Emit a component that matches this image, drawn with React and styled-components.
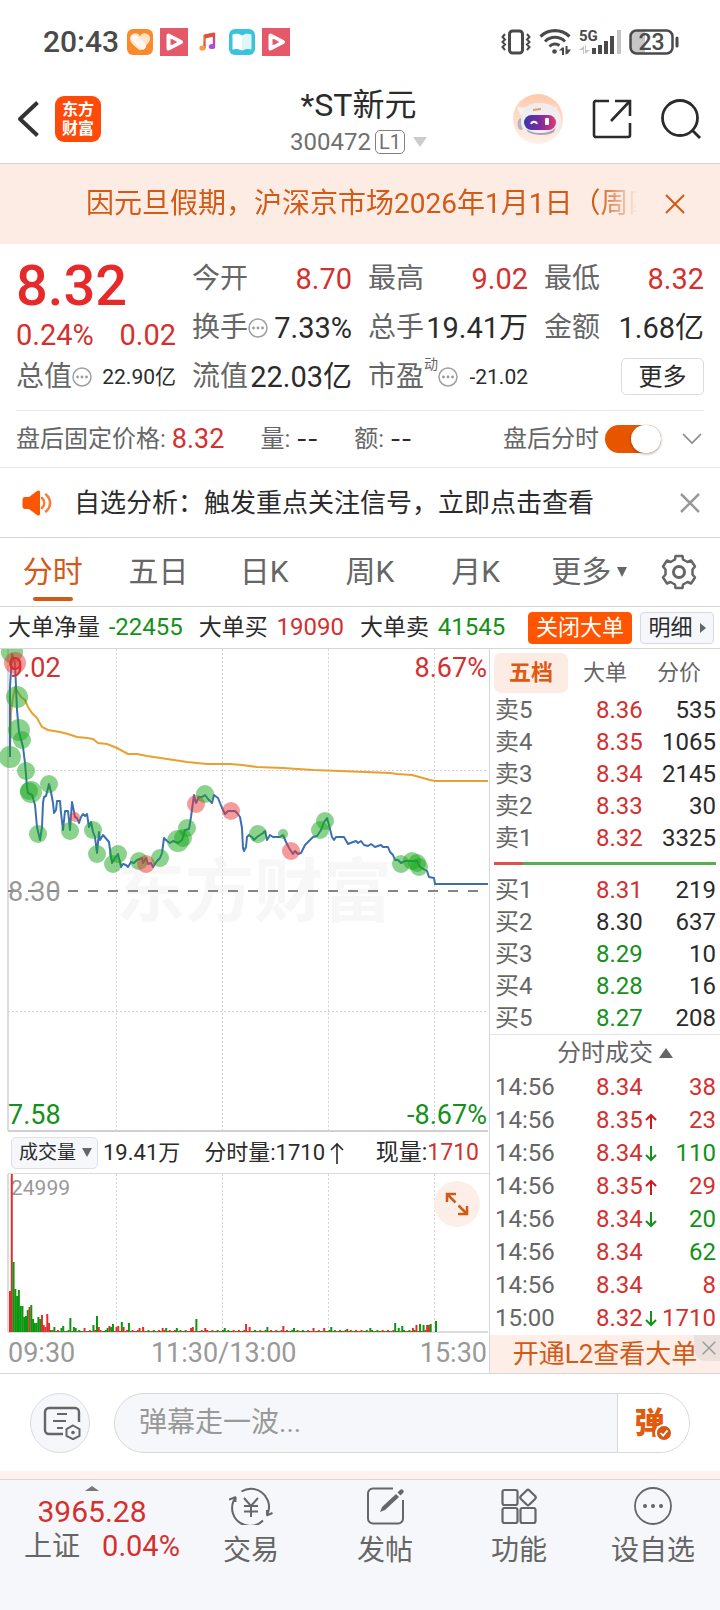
import React from "react";
import styled, { createGlobalStyle } from "styled-components";

const RED = "#d3312f";
const GREEN = "#14911a";
const ORANGE = "#d25a16";

const GlobalStyle = createGlobalStyle`
  * {
    box-sizing: border-box;
  }
  body {
    margin: 0;
    background: #fff;
    color: #2b2b2b;
    font-family: Roboto, "Noto Sans CJK SC", sans-serif;
  }
  button,
  input,
  select {
    font-family: inherit;
    color: inherit;
    margin: 0;
    padding: 0;
    border: none;
    background: none;
  }
  svg {
    display: block;
    flex-shrink: 0;
  }
`;

/* ---------- data ---------- */

const sells = [
  ["卖5", "8.36", "535"],
  ["卖4", "8.35", "1065"],
  ["卖3", "8.34", "2145"],
  ["卖2", "8.33", "30"],
  ["卖1", "8.32", "3325"],
];

const buys = [
  ["买1", "8.31", "219"],
  ["买2", "8.30", "637"],
  ["买3", "8.29", "10"],
  ["买4", "8.28", "16"],
  ["买5", "8.27", "208"],
];

const trades = [
  { time: "14:56", price: "8.34", volume: "38", tone: "up" },
  { time: "14:56", price: "8.35", arrow: "up", volume: "23", tone: "up" },
  { time: "14:56", price: "8.34", arrow: "down", volume: "110", tone: "down" },
  { time: "14:56", price: "8.35", arrow: "up", volume: "29", tone: "up" },
  { time: "14:56", price: "8.34", arrow: "down", volume: "20", tone: "down" },
  { time: "14:56", price: "8.34", volume: "62", tone: "down" },
  { time: "14:56", price: "8.34", volume: "8", tone: "up" },
  { time: "15:00", price: "8.32", arrow: "down", volume: "1710", tone: "up" },
];

const priceLine =
  "10,108 10,38 12,5 15,14 16,38 17,61 19,83 23,98 25,114 27,138 28,144 32,146 35,156 37,178 40,191 42,178 43,154 44,148 46,147 49,135 51,143 53,154 54,164 56,161 57,152 60,152 61,164 63,181 65,162 68,162 69,171 70,181 72,153 73,158 75,168 77,169 79,174 81,168 83,165 85,167 87,165 89,178 91,173 93,183 95,188 97,204 99,183 100,191 103,186 109,193 111,208 112,214 115,209 118,205 121,218 123,215 126,216 128,218 131,213 134,214 137,211 142,209 143,214 146,209 148,215 151,214 153,218 157,212 160,209 162,204 164,189 167,192 170,194 173,192 178,194 182,191 185,181 189,180 191,168 194,146 196,154 199,148 202,148 205,146 208,150 212,154 214,146 218,149 222,159 225,165 228,162 235,162 237,164 240,168 242,179 243,199 244,202 246,198 247,188 249,186 252,188 254,191 257,188 260,186 263,184 265,182 267,191 270,186 273,188 280,188 283,186 286,193 289,199 293,205 295,202 298,205 301,204 305,196 310,191 313,188 317,187 321,181 324,173 327,169 329,176 332,188 334,191 336,188 344,188 348,195 353,193 356,192 358,194 361,192 364,196 368,197 371,195 375,198 381,196 383,198 388,198 390,203 393,206 395,211 398,211 401,214 405,212 417,212 420,218 427,222 429,228 434,229 435,235 488,235";

const averageLine =
  "10,108 11,64 13,48 15,39 18,43 21,48 25,51 28,58 32,64 37,69 42,78 48,81 60,83 68,85 77,88 87,89 93,90 98,94 107,95 117,99 128,105 137,105 147,107 167,110 187,113 207,115 230,115 242,116 257,118 283,119 313,121 340,122 390,124 397,125 412,126 423,129 430,131 435,132 488,132";

// x, y, radius, and whether the big order was a buy
const markers = [
  [12, 3, 11], [15, 14, 11, true], [15, 14, 6, true], [17, 48, 11], [19, 81, 11],
  [22, 91, 9], [10, 108, 11], [26, 122, 9], [31, 143, 11], [29, 142, 9],
  [49, 135, 9], [38, 185, 9], [70, 182, 9], [75, 168, 5, true], [93, 181, 9],
  [97, 205, 9], [113, 215, 9], [118, 205, 9], [139, 212, 9], [146, 215, 9, true],
  [160, 209, 9], [178, 192, 11], [183, 189, 9], [187, 179, 9], [196, 155, 9, true],
  [205, 145, 9], [231, 162, 9, true], [258, 185, 9], [283, 185, 5],
  [291, 202, 9, true], [320, 181, 9], [325, 172, 9], [401, 215, 9], [412, 212, 9],
  [417, 214, 9], [419, 218, 9],
];

const opening = [
  [41, true], [158, true], [70], [43], [36], [42], [26], [26], [15], [16], [22],
  [25, true], [27], [13], [9], [9], [15], [13], [17, true], [7, true], [5, true],
  [18, true], [9, true], [2],
];

const spikes = {
  25: [5], 29: [4], 30: [6], 34: [14], 36: [5], 37: [4], 42: [4, true], 47: [7],
  49: [16], 50: [5, true], 55: [4], 56: [6, true], 57: [5], 58: [8], 60: [5, true],
  61: [6, true], 63: [10], 64: [5, true], 67: [9], 73: [4, true], 75: [5, true],
  86: [4, true], 88: [4], 94: [4], 102: [4, true], 103: [5, true], 105: [13],
  110: [4, true], 121: [4], 133: [8, true], 135: [5, true], 145: [5],
  154: [6, true], 160: [4], 171: [4, true], 177: [4, true], 181: [5], 190: [3],
  203: [4], 217: [9], 219: [4], 221: [6], 227: [4, true], 229: [7, true],
  231: [8], 233: [7], 235: [7, true], 236: [7, true], 237: [8], 240: [11],
};

const bars = Array.from({ length: 241 }, (_, i) => {
  const [height, up] =
    opening[i] || spikes[i] || (i > 237 ? [0] : [1 + ((i * 7) % 3 === 0 ? 1 : 0), (i * 5) % 7 < 4]);
  return { x: 9 + (i * 426) / 240, height, up };
});

const gridX = [116, 222, 328, 434];

/* ---------- icons ---------- */

const HeartApp = () => (
  <svg width="28" height="28" viewBox="0 0 28 28">
    <rect x="1" y="1" width="26" height="26" rx="6" fill="#fa8a2c" />
    <path d="M14 22.500C8 18 4 14.500 4 10.500A5.200 5.200 0 0 1 14 8.500a5.200 5.200 0 0 1 10 2C24 14.500 20 18 14 22.500z" fill="#ffe3c6" />
    <path d="M8.500 10l8 8" stroke="#fff8f0" strokeWidth="7" strokeLinecap="round" />
  </svg>
);

const PlayApp = () => (
  <svg width="28" height="28" viewBox="0 0 28 28">
    <rect width="28" height="28" fill="#e4586a" />
    <path d="M8.500 7.500L21 14 8.500 20.500z" fill="#e4586a" stroke="#fff" strokeWidth="4" strokeLinejoin="round" />
    <path d="M12 11l5 3-5 3z" fill="#e4586a" />
  </svg>
);

const MusicApp = () => (
  <svg width="28" height="28" viewBox="0 0 28 28">
    <defs>
      <linearGradient id="note" x1="0" y1="0" x2="1" y2="1">
        <stop offset="0" stopColor="#f0903a" />
        <stop offset=".45" stopColor="#e0483c" />
        <stop offset="1" stopColor="#a44be0" />
      </linearGradient>
    </defs>
    <path d="M10.500 20V8l9.500-2v12" fill="none" stroke="url(#note)" strokeWidth="2.400" />
    <path d="M10.500 8.500l9.500-2" stroke="#e0503c" strokeWidth="4" />
    <ellipse cx="8.500" cy="20" rx="3.200" ry="2.600" fill="#f0a040" />
    <ellipse cx="18" cy="18.500" rx="3.200" ry="2.600" fill="#b04be0" />
  </svg>
);

const BookApp = () => (
  <svg width="28" height="28" viewBox="0 0 28 28">
    <rect x="1" y="1" width="26" height="26" rx="6" fill="#38c5dc" />
    <path d="M4.500 6.500c3.500-1.500 6.500-1 9.500 1v15c-3-1.500-6-2-9.500-1z" fill="#fff" />
    <path d="M23.500 6.500c-3.500-1.500-6.500-1-9.500 1v15c3-1.500 6-2 9.500-1z" fill="#dff6fb" />
  </svg>
);

const Vibrate = () => (
  <svg width="30" height="28" viewBox="0 0 30 28" fill="none" stroke="#4a4a4a">
    <rect x="8.500" y="3" width="13" height="22" rx="3" strokeWidth="3" />
    <path d="M4 6l-2.500 3L4 11.500 1.500 14 4 16.500 1.500 19 4 22M26 6l2.500 3-2.500 2.500 2.500 2.500-2.500 2.500 2.500 2.500-2.500 3" strokeWidth="2" />
  </svg>
);

const Wifi = () => (
  <svg width="32" height="28" viewBox="0 0 32 28" fill="none" stroke="#4a4a4a">
    <path d="M1.500 8.500a21 21 0 0 1 29 0" strokeWidth="3.200" />
    <path d="M6 13.500a14 14 0 0 1 20 0" strokeWidth="3" />
    <path d="M10.500 18.500a7.500 7.500 0 0 1 10-1" strokeWidth="3" />
    <circle cx="15.500" cy="23.500" r="2.300" fill="#4a4a4a" stroke="none" />
    <path d="M20 22.500l3-3h2V27h-2v-4.500zM32 21.500l-3 4-2.500 1V18h2v3.500z" fill="#4a4a4a" stroke="none" />
  </svg>
);

const Signal = () => (
  <svg width="42" height="28" viewBox="0 0 42 28" fill="#4a4a4a">
    <text x="0" y="13" fontSize="15" fontWeight="700">5G</text>
    <path d="M0 22l5-4v8H4v-4zM11 22l-5 4v-9h1v5z" fill="#c4c4c4" />
    <path d="M13 20h4v6h-4zM19 17h4v9h-4zM25 13h4v13h-4zM31 8h4v18h-4z" />
    <path d="M38 2h4v24h-4z" fill="#c4c4c4" />
  </svg>
);

const Battery = () => (
  <svg width="50" height="28" viewBox="0 0 50 28">
    <path d="M6 3h10v22H6a4 4 0 0 1-4-4V7a4 4 0 0 1 4-4z" fill="#c6c6c6" />
    <rect x="1.500" y="2.500" width="42" height="23" rx="6" fill="none" stroke="#4a4a4a" strokeWidth="2.500" />
    <path d="M48 10v8" stroke="#4a4a4a" strokeWidth="3" strokeLinecap="round" />
    <text x="22.500" y="22" fontSize="23" fontWeight="500" fill="#4a4a4a" textAnchor="middle">23</text>
  </svg>
);

const Back = () => (
  <svg width="24" height="40" viewBox="0 0 24 40" fill="none" stroke="#333" strokeWidth="4">
    <path d="M21.500 3.500L4 20l17.500 16.500" strokeLinejoin="round" />
  </svg>
);

const Robot = () => (
  <svg width="50" height="50" viewBox="0 0 50 50">
    <defs>
      <linearGradient id="halo" x1="0" y1="0" x2="0" y2="1">
        <stop offset="0" stopColor="#ffc9ab" />
        <stop offset="1" stopColor="#fff1ea" />
      </linearGradient>
      <linearGradient id="visor">
        <stop offset="0" stopColor="#3d35a8" />
        <stop offset=".5" stopColor="#7a2aa0" />
        <stop offset="1" stopColor="#e03a70" />
      </linearGradient>
    </defs>
    <circle cx="25" cy="25" r="25" fill="url(#halo)" />
    <path d="M5 12c2 2 5 2 8 1h24c3 1 5 1 6-1 2 4 0 8-3 9H9c-3-1-5-5-4-9z" fill="#f6f2f2" />
    <ellipse cx="8" cy="30" rx="3.500" ry="6" fill="#b9b3bd" />
    <path d="M8 28c0-12 6-19 18-19s22 6 22 18c0 10-8 14-20 14S8 38 8 28z" fill="#f0edf0" />
    <path d="M12 33c4 8 26 8 31 0l-2 5c-5 4-20 4-26 0z" fill="#aaa3b5" />
    <path d="M20 15l8-1v2l-8 1z" fill="#e79a5c" />
    <rect x="11" y="21" width="32" height="15" rx="7.500" fill="url(#visor)" />
    <path d="M18 30c1-3 5-3 6 0" fill="none" stroke="#fff" strokeWidth="2" />
    <rect x="32" y="24" width="4" height="7" rx="1" fill="#fff" />
  </svg>
);

const Share = () => (
  <svg width="40" height="40" viewBox="0 0 40 40" fill="none" stroke="#2b2b2b" strokeWidth="2.600">
    <path d="M17 2H4.500A2 2 0 0 0 2 4v32a2 2 0 0 0 2.500 2H36a2 2 0 0 0 2-2V24" />
    <path d="M23 2h15v15M37 3L19 22" />
  </svg>
);

const Search = () => (
  <svg width="40" height="40" viewBox="0 0 40 40" fill="none" stroke="#2b2b2b" strokeWidth="2.800">
    <circle cx="19" cy="19" r="17.500" />
    <path d="M31 31l8 8" />
  </svg>
);

const Cross = ({ size = 20, color = "#999", weight = 2.5 }) => (
  <svg width={size} height={size} viewBox="0 0 20 20" stroke={color} strokeWidth={weight}>
    <path d="M1 1l18 18M19 1L1 19" />
  </svg>
);

const Info = () => (
  <svg width="20" height="20" viewBox="0 0 20 20" fill="#999">
    <circle cx="10" cy="10" r="9" fill="none" stroke="#a0a0a0" strokeWidth="1.500" />
    <circle cx="5.500" cy="10" r="1.400" />
    <circle cx="10" cy="10" r="1.400" />
    <circle cx="14.500" cy="10" r="1.400" />
  </svg>
);

const Triangle = ({ width = 14, height = 10, color = "#666", up }) => (
  <svg width={width} height={height} viewBox="0 0 14 10" preserveAspectRatio="none" fill={color}>
    <path d={up ? "M7 0l7 10H0z" : "M0 0h14L7 10z"} />
  </svg>
);

const Chevron = () => (
  <svg width="20" height="12" viewBox="0 0 20 12" fill="none" stroke="#888" strokeWidth="1.600">
    <path d="M1 1l9 9 9-9" />
  </svg>
);

const Speaker = () => (
  <svg width="30" height="26" viewBox="0 0 30 26">
    <path d="M3 7h4l8-6c1.500-1 3-.5 3 1v22c0 1.500-1.500 2-3 1l-8-6H3c-1.500 0-2.500-1-2.500-3V10C.5 8 1.500 7 3 7z" fill="#ff5500" />
    <path d="M20 8c3 3 3 7 0 10M24 4.500c5.500 5 5.500 12 0 17" fill="none" stroke="#ff7a33" strokeWidth="2.500" strokeLinecap="round" />
  </svg>
);

const Gear = () => (
  <svg width="36" height="36" viewBox="0 0 36 36" fill="none" stroke="#666" strokeWidth="2.500" strokeLinejoin="round">
    <path d="M14.500 2h7l.5 3.500 4.500 2.500 3.500-1.500 4 6-2.500 3v5l2.500 3-4 6-3.500-1.500-4.500 2.500-.5 3.500h-7l-.5-3.500L9.500 28 6 29.500l-4-6 2.500-3v-5l-2.500-3 4-6L9.500 8 14 5.500z" />
    <circle cx="18" cy="18" r="5.500" strokeWidth="3" />
  </svg>
);

const Tick = ({ down }) => (
  <svg width="12" height="16" viewBox="0 0 12 16" fill="none" stroke={down ? GREEN : "#d01818"} strokeWidth="2">
    <path d={down ? "M6 0v14M1 9l5 5 5-5" : "M6 16V2M1 7l5-5 5 5"} />
  </svg>
);

const Expand = () => (
  <svg width="24" height="24" viewBox="0 0 24 24" fill="none" stroke={ORANGE} strokeWidth="2.500">
    <path d="M2 10V2h9M2.500 2.500l8 8M22 14v8h-9M21.500 21.500l-8-8" />
  </svg>
);

const CommentSettings = () => (
  <svg width="38" height="34" viewBox="0 0 38 34" fill="none" stroke="#666" strokeWidth="2.400">
    <path d="M20 28H6a4 4 0 0 1-4-4V6a4 4 0 0 1 4-4h26a4 4 0 0 1 4 4v10" />
    <path d="M14 8h10M10 15h13M14 22h6" strokeWidth="2" />
    <path d="M30 19.500l6.500 3.700v6.600L30 33.200l-6.500-3.400v-6.600z" strokeWidth="2" />
    <circle cx="30" cy="26.500" r="1.800" fill="#666" stroke="none" />
  </svg>
);

const Checked = () => (
  <svg width="14" height="14" viewBox="0 0 16 16">
    <circle cx="8" cy="8" r="8" fill={ORANGE} />
    <path d="M4 8l3 3 5-6" fill="none" stroke="#fff" strokeWidth="2" />
  </svg>
);

const TradeIcon = () => (
  <svg width="44" height="38" viewBox="0 0 44 38" fill="none" stroke="#666" strokeWidth="2">
    <path d="M12.500 4.500A18 18 0 0 1 39.500 24L38 27.500M37.500 28.500l6-2.500M38 28.500V23" />
    <path d="M34 33.500A18 18 0 0 1 4.500 14L7 10M0 12.500l7-2.500M6.500 10v5" />
    <path d="M15 11l7 8 7-8M15 19h14M15 24.500h14M22 19v11" />
  </svg>
);

const PostIcon = () => (
  <svg width="38" height="38" viewBox="0 0 38 38" fill="none" stroke="#666" strokeWidth="2">
    <path d="M27 1.500H7A5 5 0 0 0 2 7v24a5 5 0 0 0 5 5.500h25a5 5 0 0 0 5-5.500V13" />
    <path d="M14 25l2-5L30 7l3 3L19 23z" fill="#666" stroke="none" />
    <path d="M31.500 5.500l2.500-2.500a2 2 0 0 1 3 3L34.500 8.500z" fill="#666" stroke="none" />
  </svg>
);

const FeaturesIcon = () => (
  <svg width="38" height="38" viewBox="0 0 38 38" fill="none" stroke="#666" strokeWidth="2.200">
    <rect x="2.500" y="3" width="15" height="15" rx="2" />
    <rect x="2.500" y="21" width="15" height="15" rx="2" />
    <rect x="20.500" y="21" width="15" height="15" rx="2" />
    <rect x="22" y="4.500" width="12" height="12" rx="2" transform="rotate(45 28 10.500)" />
  </svg>
);

const WatchIcon = () => (
  <svg width="38" height="38" viewBox="0 0 38 38" fill="#666">
    <circle cx="19" cy="19" r="18" fill="none" stroke="#666" strokeWidth="1.800" />
    <circle cx="11" cy="19" r="2" />
    <circle cx="19" cy="19" r="2" />
    <circle cx="27" cy="19" r="2" />
  </svg>
);

/* ---------- sections ---------- */

const PriceChart = () => (
  <svg width="100%" viewBox="0 0 489 483" role="img" aria-label="分时走势">
    <text x="116" y="267" fontSize="69" fontWeight="700" fill="#f7f7f7">东方财富</text>
    <g stroke="#d4d4d4" strokeDasharray="2 2">
      {gridX.map((x) => (
        <path key={x} d={`M${x}.500 0V481`} />
      ))}
      <path d="M8 121.500H488M8 362.500H488" />
    </g>
    <path d="M8 0v482" stroke="#dcdcdc" strokeWidth="2" />
    <path d="M8 482h480" stroke="#d0d0d0" strokeWidth="2" />
    <path d="M8 242h472" stroke="#858585" strokeWidth="2" strokeDasharray="10 10" />
    <polyline points={averageLine} fill="none" stroke="#e9a030" strokeWidth="2" />
    <polyline points={priceLine} fill="none" stroke="#3a70b2" strokeWidth="2" strokeLinejoin="round" />
    {markers.map(([x, y, r, buy], i) => (
      <circle key={i} cx={x} cy={y} r={r} fill={buy ? "#ec3838" : "#18a81c"} opacity=".5" />
    ))}
    <g fontSize="27">
      <text x="8" y="28" fill={RED}>9.02</text>
      <text x="487" y="28" fill={RED} textAnchor="end">8.67%</text>
      <text x="8" y="252" fill="#999">8.30</text>
      <text x="8" y="475" fill={GREEN}>7.58</text>
      <text x="487" y="475" fill={GREEN} textAnchor="end">-8.67%</text>
    </g>
  </svg>
);

const VolumeChart = () => (
  <svg width="100%" viewBox="0 0 489 159" role="img" aria-label="成交量">
    <g stroke="#d4d4d4" strokeDasharray="2 2">
      {gridX.map((x) => (
        <path key={x} d={`M${x}.500 0V158`} />
      ))}
    </g>
    <path d="M8 0v158" stroke="#dcdcdc" strokeWidth="2" />
    <path d="M8 158h480" stroke="#dcdcdc" strokeWidth="2" />
    <text x="11" y="21" fontSize="21" fill="#999">24999</text>
    {bars.map(({ x, height, up }, i) => (
      <rect key={i} x={x} y={158 - height} width="2" height={height} fill={up ? "#df2f2f" : "#0a970e"} />
    ))}
  </svg>
);

const OrderTable = ({ rows, label }) => (
  <Table aria-label={label}>
    <tbody>
      {rows.map(([name, price, amount]) => (
        <Row key={name} $height={32}>
          <RowName scope="row">{name}</RowName>
          <PriceCell $color={price > "8.30" ? RED : price < "8.30" ? GREEN : "#2b2b2b"}>
            {price}
          </PriceCell>
          <AmountCell>{amount}</AmountCell>
        </Row>
      ))}
    </tbody>
  </Table>
);

const App = () => {
  return (
    <Page>
      <GlobalStyle />
      <StatusBar>
        <Clock>20:43</Clock>
        <AppIcons>
          <HeartApp />
          <PlayApp />
          <MusicApp />
          <BookApp />
          <PlayApp />
        </AppIcons>
        <SystemIcons>
          <Vibrate />
          <Wifi />
          <Signal />
          <Battery />
        </SystemIcons>
      </StatusBar>

      <Header>
        <HeaderSide>
          <IconButton aria-label="返回">
            <Back />
          </IconButton>
          <Logo>
            <span>东方</span>
            <span>财富</span>
          </Logo>
        </HeaderSide>
        <Stock>
          <h1>*ST新元</h1>
          <p>
            300472 <Level>L1</Level>
            <Triangle width={14} height={10} color="#ccc" />
          </p>
        </Stock>
        <HeaderSide $end>
          <IconButton aria-label="智能助手">
            <Robot />
          </IconButton>
          <IconButton aria-label="分享">
            <Share />
          </IconButton>
          <IconButton aria-label="搜索">
            <Search />
          </IconButton>
        </HeaderSide>
      </Header>

      <Banner>
        <BannerText>因元旦假期，沪深京市场2026年1月1日（周四</BannerText>
        <IconButton aria-label="关闭公告">
          <Cross color={ORANGE} weight={2} />
        </IconButton>
      </Banner>

      <Quote>
        <Latest>
          <strong>8.32</strong>
          <div>
            <span>0.24%</span>
            <span>0.02</span>
          </div>
        </Latest>
        <Stat $color={RED}><span>今开</span><b>8.70</b></Stat>
        <Stat $color={RED}><span>最高</span><b>9.02</b></Stat>
        <Stat $color={RED}><span>最低</span><b>8.32</b></Stat>
        <Stat><span>换手</span><Info /><b>7.33%</b></Stat>
        <Stat><span>总手</span><b>19.41万</b></Stat>
        <Stat><span>金额</span><b>1.68亿</b></Stat>
        <Stat $small><span>总值</span><Info /><b>22.90亿</b></Stat>
        <Stat><span>流值</span><b>22.03亿</b></Stat>
        <Stat $small><span>市盈</span><sup>动</sup><Info /><b>-21.02</b></Stat>
        <MoreButton>更多</MoreButton>
      </Quote>

      <AfterHours>
        <span>盘后固定价格:</span>
        <FixedPrice>8.32</FixedPrice>
        <Pair>量: <b>--</b></Pair>
        <Pair>额: <b>--</b></Pair>
        <ToggleLabel htmlFor="after-hours">盘后分时</ToggleLabel>
        <Toggle id="after-hours" type="checkbox" defaultChecked />
        <IconButton aria-label="展开">
          <Chevron />
        </IconButton>
      </AfterHours>

      <Notice>
        <Speaker />
        <p>自选分析：触发重点关注信号，立即点击查看</p>
        <IconButton aria-label="关闭提示">
          <Cross />
        </IconButton>
      </Notice>

      <Tabs>
        <Tab $active>分时</Tab>
        <Tab>五日</Tab>
        <Tab>日K</Tab>
        <Tab>周K</Tab>
        <Tab>月K</Tab>
        <Tab $wide>
          更多
          <Triangle width={10} height={10} />
        </Tab>
        <IconButton aria-label="设置">
          <Gear />
        </IconButton>
      </Tabs>

      <BigOrders>
        <Figure $color={GREEN}>大单净量 <b>-22455</b></Figure>
        <Figure $color={RED}>大单买 <b>19090</b></Figure>
        <Figure $color={GREEN}>大单卖 <b>41545</b></Figure>
        <SmallButton $primary>关闭大单</SmallButton>
        <SmallButton>
          明细
          <svg width="6" height="10" viewBox="0 0 6 10" fill="#666">
            <path d="M0 0l6 5-6 5z" />
          </svg>
        </SmallButton>
      </BigOrders>

      <Main>
        <Charts>
          <PriceChart />
          <VolumeBar>
            <SelectBox>
              <select aria-label="指标" defaultValue="成交量">
                <option>成交量</option>
                <option>成交额</option>
              </select>
              <Triangle width={10} height={9} />
            </SelectBox>
            <span>19.41万</span>
            <MinuteVolume>
              分时量:1710
              <svg width="14" height="22" viewBox="0 0 14 22" fill="none" stroke="#2b2b2b" strokeWidth="1.600">
                <path d="M7 22V2M1 8l6-6 6 6" />
              </svg>
            </MinuteVolume>
            <Current>现量:<b>1710</b></Current>
          </VolumeBar>
          <VolumePlot>
            <VolumeChart />
            <ExpandButton aria-label="全屏">
              <Expand />
            </ExpandButton>
          </VolumePlot>
          <TimeAxis>
            <span>09:30</span>
            <span>11:30/13:00</span>
            <span>15:30</span>
          </TimeAxis>
        </Charts>

        <Depth>
          <DepthTabs>
            <DepthTab $active>五档</DepthTab>
            <DepthTab>大单</DepthTab>
            <DepthTab>分价</DepthTab>
          </DepthTabs>
          <OrderTable rows={sells} label="卖盘" />
          <Ratio />
          <OrderTable rows={buys} label="买盘" />
          <TradesTitle>
            分时成交
            <Triangle up width={14} height={10} />
          </TradesTitle>
          <Table aria-label="分时成交">
            <tbody>
              {trades.map(({ time, price, arrow, volume, tone }, i) => (
                <Row key={i} $height={33}>
                  <RowName scope="row">{time}</RowName>
                  <PriceCell $color={RED}>
                    <div>
                      {price}
                      {arrow && <Tick down={arrow === "down"} />}
                    </div>
                  </PriceCell>
                  <AmountCell $color={tone === "up" ? RED : GREEN}>{volume}</AmountCell>
                </Row>
              ))}
            </tbody>
          </Table>
          <Upsell>
            <a href="#l2">开通L2查看大单</a>
            <UpsellClose aria-label="关闭">
              <Cross size={14} weight={2} />
            </UpsellClose>
          </Upsell>
        </Depth>
      </Main>

      <Composer>
        <RoundButton aria-label="弹幕设置">
          <CommentSettings />
        </RoundButton>
        <Field>
          <input aria-label="弹幕" placeholder="弹幕走一波..." />
          <Danmu>
            弹
            <DanmuBadge>
              <Checked />
            </DanmuBadge>
          </Danmu>
        </Field>
      </Composer>

      <BottomBar>
        <Index href="#index">
          <Triangle up width={14} height={5} color="#777" />
          <strong>3965.28</strong>
          <div>
            上证<b>0.04%</b>
          </div>
        </Index>
        <NavItem href="#trade"><TradeIcon />交易</NavItem>
        <NavItem href="#post"><PostIcon />发帖</NavItem>
        <NavItem href="#features"><FeaturesIcon />功能</NavItem>
        <NavItem href="#watch"><WatchIcon />设自选</NavItem>
      </BottomBar>
    </Page>
  );
};

/* ---------- styles ---------- */

const Page = styled.div`
  display: flex;
  flex-direction: column;
  min-height: 100vh;
`;

const IconButton = styled.button`
  display: flex;
  align-items: center;
  justify-content: center;
  flex-shrink: 0;
  cursor: pointer;
`;

const StatusBar = styled.div`
  display: flex;
  align-items: center;
  height: 84px;
  padding: 0 41px 0 43px;
`;

const Clock = styled.span`
  font-size: 30px;
  font-weight: 500;
  line-height: 36px;
  color: #4a4a4a;
`;

const AppIcons = styled.div`
  display: flex;
  gap: 6px;
  margin-left: 7px;
`;

const SystemIcons = styled.div`
  display: flex;
  gap: 8px;
  margin-left: auto;
`;

const Header = styled.header`
  display: grid;
  grid-template-columns: 1fr auto 1fr;
  align-items: center;
  height: 80px;
  padding: 0 19px 0 16px;
  border-bottom: 1px solid #d6d6d6;
`;

const HeaderSide = styled.div`
  display: flex;
  align-items: center;
  gap: ${({ $end }) => ($end ? "29px" : "15px")};
  justify-content: ${({ $end }) => ($end ? "flex-end" : "flex-start")};
  padding-bottom: 10px;
`;

const Logo = styled.div`
  display: flex;
  flex-direction: column;
  align-items: center;
  justify-content: center;
  width: 46px;
  height: 46px;
  border-radius: 9px;
  background: #ff4a0a;
  color: #fff;
  font-size: 16px;
  font-weight: 700;
  line-height: 19px;
`;

const Stock = styled.div`
  text-align: center;
  padding-bottom: 4px;
  h1 {
    margin: 0;
    font-size: 32px;
    font-weight: 400;
    line-height: 40px;
  }
  p {
    display: flex;
    align-items: center;
    justify-content: center;
    gap: 4px;
    margin: 0;
    font-size: 24px;
    line-height: 34px;
    color: #707070;
  }
  svg {
    margin-left: 4px;
  }
`;

const Level = styled.span`
  padding: 0 3px;
  border: 1px solid #808080;
  border-radius: 5px;
  font-size: 20px;
  line-height: 22px;
`;

const Banner = styled.div`
  display: flex;
  align-items: center;
  justify-content: space-between;
  height: 80px;
  padding: 0 35px 0 86px;
  background: #fcece3;
  color: ${ORANGE};
`;

const BannerText = styled.span`
  flex: 1;
  margin-right: 28px;
  overflow: hidden;
  white-space: nowrap;
  font-size: 28px;
  line-height: 40px;
  mask-image: linear-gradient(to left, transparent, #000 40px);
`;

const Quote = styled.section`
  display: grid;
  grid-template-columns: repeat(4, minmax(0, 1fr));
  grid-auto-rows: 49px;
  column-gap: 16px;
  margin: 0 16px;
  padding: 10px 0 9px;
  border-bottom: 1px solid #e8e8e8;
`;

const Latest = styled.div`
  grid-row: span 2;
  color: ${RED};
  strong {
    display: block;
    font-size: 56px;
    font-weight: 500;
    line-height: 64px;
    color: #e62a2a;
  }
  div {
    display: flex;
    justify-content: space-between;
    font-size: 29px;
    line-height: 34px;
  }
`;

const Stat = styled.div`
  display: flex;
  align-items: center;
  white-space: nowrap;
  font-size: 28px;
  line-height: 40px;
  color: #666;
  b {
    margin-left: auto;
    font-size: ${({ $small }) => ($small ? "21px" : "29px")};
    font-weight: 400;
    color: ${({ $color }) => $color || "#2b2b2b"};
  }
  sup {
    align-self: flex-start;
    font-size: 14px;
    line-height: 24px;
  }
`;

const MoreButton = styled.button`
  justify-self: end;
  align-self: center;
  width: 83px;
  height: 37px;
  border: 1px solid #dcdcdc;
  border-radius: 5px;
  font-size: 24px;
  line-height: 34px;
`;

const AfterHours = styled.div`
  display: flex;
  align-items: center;
  height: 57px;
  padding: 0 18px 0 16px;
  border-bottom: 1px solid #e8e8e8;
  white-space: nowrap;
  font-size: 24px;
  line-height: 32px;
  color: #666;
`;

const FixedPrice = styled.span`
  margin-left: 6px;
  font-size: 27px;
  color: ${RED};
`;

const Pair = styled.span`
  margin-left: 36px;
  b {
    font-family: Inter, sans-serif;
    font-weight: 400;
    color: #2b2b2b;
  }
`;

const ToggleLabel = styled.label`
  margin-left: auto;
`;

const Toggle = styled.input`
  appearance: none;
  display: flex;
  justify-content: flex-end;
  width: 56px;
  height: 28px;
  margin: 0 21px 0 6px;
  border-radius: 14px;
  background: #ccc;
  &:checked {
    background: #e85500;
  }
  &:not(:checked) {
    justify-content: flex-start;
  }
  &::before {
    content: "";
    width: 30px;
    height: 28px;
    border-radius: 14px;
    background: #fff;
    box-shadow: 0 1px 3px rgba(0, 0, 0, 0.35);
  }
`;

const Notice = styled.div`
  display: flex;
  align-items: center;
  height: 70px;
  padding: 0 20px 0 22px;
  border-bottom: 1px solid #d6d6d6;
  p {
    flex: 1;
    margin: 0 0 0 22px;
    font-size: 26px;
    line-height: 40px;
  }
`;

const Tabs = styled.nav`
  display: flex;
  height: 69px;
  padding-right: 12px;
  border-bottom: 1px solid #d6d6d6;
  > ${IconButton} {
    flex: 58;
  }
`;

const Tab = styled.button`
  position: relative;
  display: flex;
  align-items: center;
  justify-content: center;
  gap: 6px;
  flex: ${({ $wide }) => ($wide ? 122 : 106)};
  font-size: 30px;
  line-height: 40px;
  color: ${({ $active }) => ($active ? ORANGE : "#666")};
  cursor: pointer;
  &::after {
    content: "";
    display: ${({ $active }) => ($active ? "block" : "none")};
    position: absolute;
    bottom: 5px;
    width: 40px;
    height: 4px;
    border-radius: 2px;
    background: ${ORANGE};
  }
`;

const BigOrders = styled.div`
  display: flex;
  align-items: center;
  gap: 16px;
  height: 42px;
  padding: 0 6px 0 8px;
  border-bottom: 1px solid #d6d6d6;
`;

const Figure = styled.span`
  white-space: nowrap;
  font-size: 23px;
  line-height: 32px;
  b {
    margin-left: 3px;
    font-size: 24px;
    font-weight: 400;
    color: ${({ $color }) => $color};
  }
`;

const SmallButton = styled.button`
  display: flex;
  align-items: center;
  justify-content: center;
  gap: 7px;
  width: ${({ $primary }) => ($primary ? "104px" : "74px")};
  height: 32px;
  margin-left: ${({ $primary }) => ($primary ? "auto" : "-8px")};
  border: 1px solid ${({ $primary }) => ($primary ? "#ff5500" : "#d6d9df")};
  border-radius: 4px;
  background: ${({ $primary }) => ($primary ? "#ff5500" : "#f6f7fb")};
  color: ${({ $primary }) => ($primary ? "#fff" : "#2b2b2b")};
  white-space: nowrap;
  font-size: 22px;
  line-height: 30px;
`;

const Main = styled.main`
  display: grid;
  grid-template-columns: minmax(0, 1fr) 231px;
  border-bottom: 1px solid #d6d6d6;
`;

const Charts = styled.section`
  min-width: 0;
`;

const VolumeBar = styled.div`
  display: flex;
  align-items: center;
  height: 42px;
  margin-left: 8px;
  padding: 0 10px 0 3px;
  border-bottom: 1px solid #dcdcdc;
  white-space: nowrap;
  font-size: 22px;
  line-height: 30px;
`;

const SelectBox = styled.div`
  display: flex;
  align-items: center;
  gap: 6px;
  height: 32px;
  margin-right: 5px;
  padding: 0 5px 0 7px;
  border: 1px solid #dfe1e6;
  border-radius: 5px;
  background: #f6f7fb;
  select {
    appearance: none;
    width: 57px;
    font-size: 19px;
    line-height: 28px;
  }
`;

const MinuteVolume = styled.span`
  display: flex;
  align-items: center;
  gap: 5px;
  margin-left: 24px;
`;

const Current = styled.span`
  margin-left: auto;
  font-size: 23px;
  b {
    font-weight: 400;
    color: ${RED};
  }
`;

const VolumePlot = styled.div`
  position: relative;
`;

const ExpandButton = styled.button`
  position: absolute;
  top: 7px;
  right: 9px;
  display: flex;
  align-items: center;
  justify-content: center;
  width: 46px;
  height: 46px;
  border-radius: 50%;
  background: #fdefe8;
`;

const TimeAxis = styled.div`
  display: grid;
  grid-template-columns: 3fr auto 4fr;
  height: 40px;
  padding: 0 2px 0 8px;
  font-size: 27px;
  line-height: 40px;
  color: #999;
  span:last-child {
    text-align: right;
  }
`;

const Depth = styled.aside`
  border-left: 1px solid #d6d6d6;
`;

const DepthTabs = styled.div`
  display: flex;
  height: 45px;
  padding: 4px 4px 1px;
`;

const DepthTab = styled.button`
  flex: 1;
  border-radius: 7px;
  background: ${({ $active }) => ($active ? "#fdece4" : "transparent")};
  color: ${({ $active }) => ($active ? "#e2580f" : "#666")};
  font-size: 22px;
  font-weight: ${({ $active }) => ($active ? 700 : 400)};
  line-height: 40px;
`;

const Table = styled.table`
  width: 100%;
  table-layout: fixed;
  border-collapse: collapse;
  font-size: 24px;
`;

const Row = styled.tr`
  height: ${({ $height }) => $height}px;
  line-height: ${({ $height }) => $height}px;
  th,
  td {
    padding: 0;
  }
`;

const RowName = styled.th`
  && {
    width: 106px;
    padding-left: 5px;
  }
  text-align: left;
  font-weight: 400;
  color: #666;
`;

const PriceCell = styled.td`
  width: 62px;
  color: ${({ $color }) => $color};
  div {
    display: flex;
    align-items: center;
    gap: 2px;
  }
`;

const AmountCell = styled.td`
  && {
    padding-right: 4px;
  }
  text-align: right;
  color: ${({ $color }) => $color || "#2b2b2b"};
`;

const Ratio = styled.div`
  height: 3px;
  margin: 8px 4px 9px;
  background: linear-gradient(to right, #e05050 13%, #5aad50 13%);
`;

const TradesTitle = styled.div`
  display: flex;
  align-items: center;
  justify-content: center;
  gap: 6px;
  height: 37px;
  padding-left: 20px;
  border-top: 1px solid #e4e4e4;
  font-size: 24px;
  line-height: 36px;
  color: #666;
`;

const Upsell = styled.div`
  position: relative;
  height: 38px;
  background: #fdeee7;
  text-align: center;
  a {
    color: ${ORANGE};
    text-decoration: none;
    font-size: 26px;
    line-height: 38px;
  }
`;

const UpsellClose = styled.button`
  position: absolute;
  top: 0;
  right: 0;
  display: flex;
  align-items: center;
  justify-content: center;
  width: 26px;
  height: 26px;
  padding-left: 4px;
  border-bottom-left-radius: 12px;
  background: rgba(226, 218, 214, 0.7);
`;

const Composer = styled.div`
  display: flex;
  align-items: center;
  gap: 24px;
  padding: 19px 30px 18px;
  border-bottom: 8px solid #fff2ee;
`;

const RoundButton = styled(IconButton)`
  width: 60px;
  height: 60px;
  padding-left: 4px;
  border: 1px solid #d9dce1;
  border-radius: 50%;
  background: #f6f7fa;
`;

const Field = styled.div`
  display: flex;
  flex: 1;
  height: 60px;
  border: 1px solid #d6d8dc;
  border-radius: 30px;
  background: #f6f7fa;
  overflow: hidden;
  input {
    flex: 1;
    min-width: 0;
    padding-left: 24px;
    outline: none;
    font-size: 28px;
    line-height: 40px;
    &::placeholder {
      color: #999;
      opacity: 1;
    }
  }
`;

const Danmu = styled.button`
  position: relative;
  width: 72px;
  padding-right: 8px;
  border-left: 1px solid #d6d8dc;
  background: #fff;
  color: #e05a10;
  font-size: 30px;
  font-weight: 900;
  line-height: 56px;
`;

const DanmuBadge = styled.span`
  position: absolute;
  right: 16px;
  bottom: 10px;
  border: 2px solid #fff;
  border-radius: 50%;
`;

const BottomBar = styled.nav`
  display: flex;
  flex: 1;
  min-height: 131px;
  border-top: 1px solid #d6d6d6;
  background: #f6f7fa;
`;

const Index = styled.a`
  display: flex;
  flex-direction: column;
  align-items: center;
  flex: 184;
  padding-top: 6px;
  text-decoration: none;
  font-size: 28px;
  line-height: 34px;
  color: #666;
  strong {
    margin-top: 4px;
    font-size: 30px;
    font-weight: 400;
    color: ${RED};
  }
  b {
    margin-left: 22px;
    font-size: 29px;
    font-weight: 400;
    color: ${RED};
  }
  div {
    padding-left: 20px;
  }
`;

const NavItem = styled.a`
  display: flex;
  flex-direction: column;
  align-items: center;
  gap: 6px;
  flex: 134;
  padding-top: 7px;
  text-decoration: none;
  white-space: nowrap;
  font-size: 28px;
  line-height: 40px;
  color: #666;
`;

export default App;
